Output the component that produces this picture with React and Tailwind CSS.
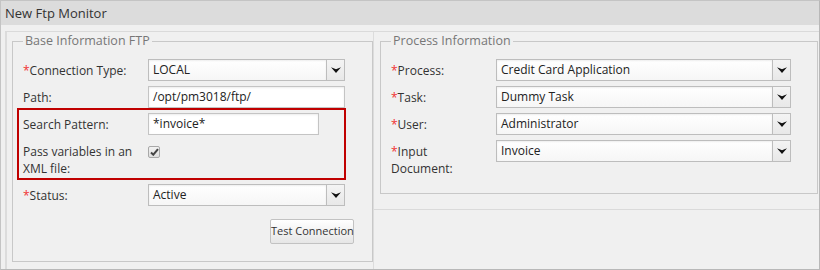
import React from 'react';

const Caret = () => (
    <svg width="10" height="6" viewBox="0 0 10 6">
        <polygon points="0,0.3 5,2.2 10,0.3 5,6" fill="#111" />
    </svg>
);

const Star = () => <span className="text-[#f03030]">*</span>;

const Select = ({ value, width }) => (
    <div className={`flex h-[22px] shrink-0 border border-[#bdbdbd] bg-white ${width}`}>
        <div className="flex-1 pl-[4px] leading-[20px] text-[#222] bg-gradient-to-b from-white to-[#f6f6f6] shadow-[inset_0_1px_2px_rgba(0,0,0,0.07)]">
            {value}
        </div>
        <div className="w-[18px] border-l border-[#bdbdbd] bg-gradient-to-b from-[#f4f4f4] to-[#e8e8e8] flex items-center justify-center">
            <Caret />
        </div>
    </div>
);

const TextInput = ({ value, width }) => (
    <div className={`h-[22px] shrink-0 border border-[#c4c4c4] bg-white pl-[4px] leading-[20px] text-[#222] shadow-[inset_0_1px_2px_rgba(0,0,0,0.08)] ${width}`}>
        {value}
    </div>
);

const Row = ({ label, labelWidth, children, className = '' }) => (
    <div className={`flex items-start ${className}`}>
        <div className={`shrink-0 pl-[6px] pt-[3px] leading-[17px] text-[#333] ${labelWidth}`}>{label}</div>
        {children}
    </div>
);

const App = () => {
    return (
        <div className="w-[820px] h-[270px] border border-[#c4c4c4] border-r-[#b8b8b8] border-b-[#b8b8b8] bg-[#f0f0f0] text-[12px] font-['Open_Sans',sans-serif] flex flex-col overflow-hidden">
            {/* HEADER */}
            <div className="h-[24px] shrink-0 bg-[#dcdcdc] pl-[4px] leading-[24px] text-[13px] text-[#333]">New Ftp Monitor</div>

            {/* BODY */}
            <div className="flex-1 pt-[6px] pl-[4px]">
                <div className="flex h-full border-t border-[#dadada]">
                    {/* LEFT PANEL */}
                    <div className="w-[369px] shrink-0 border-l-2 border-r border-[#dcdcdc] pl-[5px] pt-[1px]">
                        <fieldset className="border border-[#c8c8c8] pl-[4px] pb-[17px]">
                            <legend className="ml-[6px] px-[2px] leading-[16px] text-[12.5px] text-[#777]">Base Information FTP</legend>
                            <Row label={<><Star />Connection Type:</>} labelWidth="w-[131px]" className="mt-[10px]">
                                <Select value="LOCAL" width="w-[197px]" />
                            </Row>
                            <Row label="Path:" labelWidth="w-[131px]" className="mt-[5px]">
                                <TextInput value="/opt/pm3018/ftp/" width="w-[197px]" />
                            </Row>

                            {/* highlighted block */}
                            <div className="w-[329px] border-2 border-[#c00000] pt-[3px] pb-[1px]">
                                <div className="flex items-start">
                                    <div className="w-[129px] shrink-0 pl-[4px] pt-[3px] leading-[17px] text-[#333]">Search Pattern:</div>
                                    <TextInput value="*invoice*" width="w-[171px]" />
                                </div>
                                <div className="flex items-start mt-[5px]">
                                    <div className="w-[129px] shrink-0 pl-[4px] pr-[8px] pt-[3px] leading-[17px] text-[#333]">
                                        Pass variables in an XML file:
                                    </div>
                                    <div className="mt-[6px] w-[12px] h-[12px] rounded-[2px] border border-[#a8a8a8] bg-gradient-to-b from-[#f2f2f2] to-[#dedede] flex items-center justify-center">
                                        <svg width="9" height="8" viewBox="0 0 9 8">
                                            <path d="M1 4.5 L3.3 6.7 L8 1.2" stroke="#444" strokeWidth="2" fill="none" />
                                        </svg>
                                    </div>
                                </div>
                            </div>

                            <Row label={<><Star />Status:</>} labelWidth="w-[131px]" className="mt-[4px]">
                                <Select value="Active" width="w-[197px]" />
                            </Row>
                            <div className="flex justify-end mt-[13px] pr-[18px]">
                                <button className="h-[25px] w-[84px] whitespace-nowrap rounded-[2px] border border-[#c2c2c2] bg-gradient-to-b from-white to-[#e6e6e6] text-[11px] text-[#333]">
                                    Test Connection
                                </button>
                            </div>
                        </fieldset>
                    </div>

                    {/* RIGHT PANEL */}
                    <div className="flex-1 self-start border-b border-[#dadada] pl-[6px] pt-[1px] pb-[15px] pr-[1px]">
                        <fieldset className="border border-[#c8c8c8] pl-[4px] pb-[16px]">
                            <legend className="ml-[6px] px-[2px] leading-[16px] text-[12.5px] text-[#777]">Process Information</legend>
                            <Row label={<><Star />Process:</>} labelWidth="w-[111px]" className="mt-[10px]">
                                <Select value="Credit Card Application" width="w-[295px]" />
                            </Row>
                            <Row label={<><Star />Task:</>} labelWidth="w-[111px]" className="mt-[5px]">
                                <Select value="Dummy Task" width="w-[295px]" />
                            </Row>
                            <Row label={<><Star />User:</>} labelWidth="w-[111px]" className="mt-[5px]">
                                <Select value="Administrator" width="w-[295px]" />
                            </Row>
                            <Row label={<><Star />Input<br />Document:</>} labelWidth="w-[111px]" className="mt-[5px]">
                                <Select value="Invoice" width="w-[295px]" />
                            </Row>
                        </fieldset>
                    </div>
                </div>
            </div>
        </div>
    );
};

export default App;
